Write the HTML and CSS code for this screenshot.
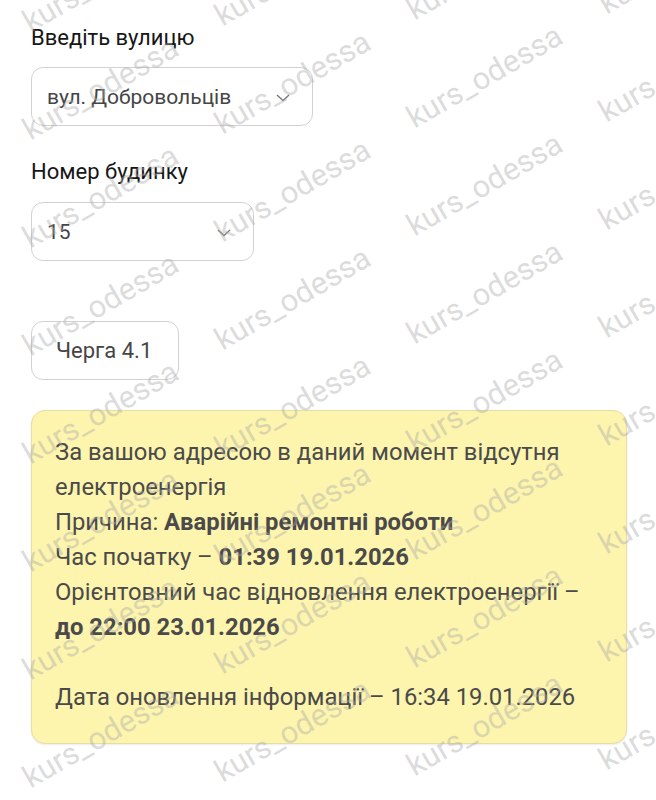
FILE: index.html
```html
<!DOCTYPE html>
<html lang="uk">
<head>
<meta charset="utf-8">
<title>Відключення</title>
<link rel="stylesheet" href="styles.css">
</head>
<body>
<main class="page">
  <label class="label">Введіть вулицю</label>
  <div class="select select-street">
    <span class="select-value">вул. Добровольців</span>
    <svg class="chevron" width="14" height="8" viewBox="0 0 14 8"><path d="M1 1 L7 6.5 L13 1" fill="none" stroke="#777" stroke-width="1.3"/></svg>
  </div>
  <label class="label label-house">Номер будинку</label>
  <div class="select select-house">
    <span class="select-value">15</span>
    <svg class="chevron" width="14" height="8" viewBox="0 0 14 8"><path d="M1 1 L7 6.5 L13 1" fill="none" stroke="#777" stroke-width="1.3"/></svg>
  </div>
  <div class="queue">Черга 4.1</div>
  <div class="notice">
    <p>За вашою адресою в даний момент відсутня електроенергія<br>
    Причина: <b>Аварійні ремонтні роботи</b><br>
    Час початку – <b>01:39 19.01.2026</b><br>
    Орієнтовний час відновлення електроенергії – <b>до 22:00 23.01.2026</b><br>
    <br>
    Дата оновлення інформації – 16:34 19.01.2026</p>
  </div>
</main>
<div class="watermarks" aria-hidden="true">
  <span>kurs_odessa</span><span>kurs_odessa</span><span>kurs_odessa</span><span>kurs_odessa</span>
  <span>kurs_odessa</span><span>kurs_odessa</span><span>kurs_odessa</span><span>kurs_odessa</span>
  <span>kurs_odessa</span><span>kurs_odessa</span><span>kurs_odessa</span><span>kurs_odessa</span>
  <span>kurs_odessa</span><span>kurs_odessa</span><span>kurs_odessa</span><span>kurs_odessa</span>
  <span>kurs_odessa</span><span>kurs_odessa</span><span>kurs_odessa</span><span>kurs_odessa</span>
  <span>kurs_odessa</span><span>kurs_odessa</span><span>kurs_odessa</span><span>kurs_odessa</span>
  <span>kurs_odessa</span><span>kurs_odessa</span><span>kurs_odessa</span><span>kurs_odessa</span>
  <span>kurs_odessa</span><span>kurs_odessa</span><span>kurs_odessa</span><span>kurs_odessa</span>
</div>
</body>
</html>
```
FILE: styles.css
```css
html, body {
  margin: 0;
  padding: 0;
  background: #ffffff;
}
body {
  position: relative;
  width: 656px;
  height: 800px;
  overflow: hidden;
  font-family: Roboto, "Noto Sans", Arial, sans-serif;
}
.page {
  display: flex;
  flex-direction: column;
  align-items: flex-start;
  padding: 25px 30px 0 31px;
}
.label {
  display: block;
  font-size: 22px;
  line-height: 26px;
  color: #161616;
}
.label-house {
  margin-top: 33px;
}
.select {
  display: flex;
  align-items: center;
  justify-content: space-between;
  box-sizing: border-box;
  height: 59px;
  margin-top: 16px;
  padding: 0 22px 0 15px;
  border: 1px solid #d2d2d2;
  border-radius: 12px;
  background: #fff;
}
.select-street { width: 282px; }
.select-house { width: 223px; margin-top: 17px; }
.select-value {
  font-size: 21px;
  color: #454545;
}
.chevron { display: block; margin-top: 2px; }
.queue {
  box-sizing: border-box;
  height: 59px;
  margin-top: 60px;
  padding: 0 0 0 24px;
  width: 148px;
  display: flex;
  align-items: center;
  border: 1px solid #d2d2d2;
  border-radius: 12px;
  font-size: 22px;
  color: #454545;
}
.notice {
  box-sizing: border-box;
  width: 596px;
  margin-top: 30px;
  padding: 24px 22px 28px 23px;
  background: #fdf4ae;
  border: 1px solid #e7dea2;
  border-radius: 14px;
  box-shadow: 0 1px 2px rgba(0,0,0,0.08);
}
.notice p {
  margin: 0;
  font-size: 23.8px;
  line-height: 35px;
  color: #4a4a4a;
}
.notice b {
  font-weight: 700;
  color: #4a4a4a;
}
.watermarks {
  position: absolute;
  left: 0;
  top: 0;
  width: 656px;
  height: 800px;
  overflow: hidden;
  pointer-events: none;
  display: grid;
  grid-template-columns: repeat(4, 192px);
  grid-auto-rows: 108px;
  padding: 8px 0 0 30px;
  box-sizing: border-box;
}
.watermarks span {
  display: block;
  width: 190px;
  height: 30px;
  font-family: Roboto, Arial, sans-serif;
  font-size: 31px;
  line-height: 30px;
  white-space: nowrap;
  color: rgba(170, 170, 170, 0.42);
  transform-origin: 0 24px;
  transform: rotate(-30deg);
}
.watermarks span:nth-child(4n+2) { transform: translateY(-6px) rotate(-30deg); }
.watermarks span:nth-child(4n+3) { transform: translateY(-12px) rotate(-30deg); }
.watermarks span:nth-child(4n+4) { transform: translateY(-18px) rotate(-30deg); }
```
